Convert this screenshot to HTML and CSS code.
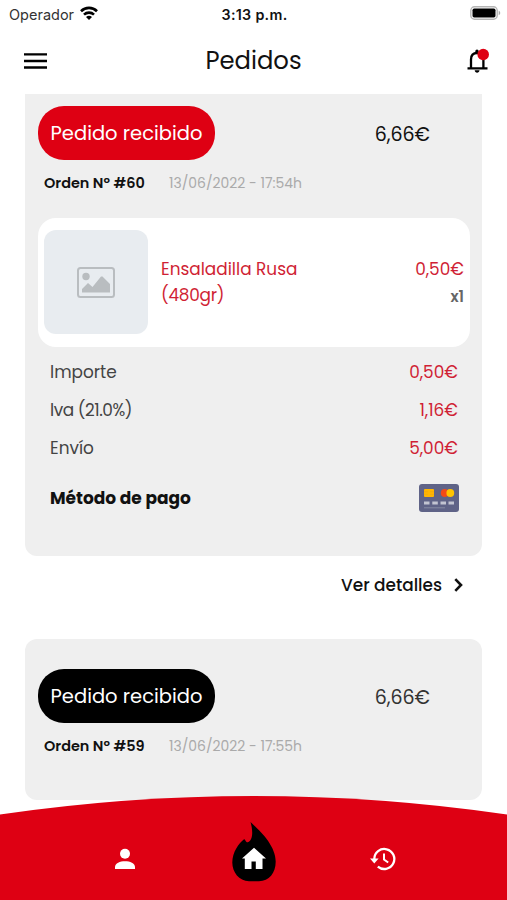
FILE: index.html
```html
<!DOCTYPE html>
<html lang="es">
<head>
<meta charset="utf-8">
<meta name="viewport" content="width=device-width, initial-scale=1">
<title>Pedidos</title>
<link rel="stylesheet" href="styles.css">
</head>
<body>
<div class="app">
  <div class="status-bar">
    <div class="carrier"><span>Operador</span>
      <svg class="wifi" viewBox="0 0 18 14"><g fill="none" stroke="#000" stroke-width="2.6"><path d="M1 5.2a11.4 11.4 0 0 1 16 0"/><path d="M4 8.600a7.2 7.2 0 0 1 10 0"/></g><path d="M9 14L6 11.100a4.4 4.4 0 0 1 6 0z"/></svg>
    </div>
    <span class="clock">3:13 p.m.</span>
    <svg class="battery" viewBox="0 0 31 14"><rect x=".8" y=".8" width="26.4" height="12.4" rx="3.7" fill="#fff" stroke="#b5b5b5" stroke-width="1.4"/><rect x="2.5" y="2.5" width="23" height="9" rx="1.7"/><path d="M28.7 4.8c2 .7 2 3.7 0 4.400z" fill="#aaa"/></svg>
  </div>
  <header class="header">
    <svg class="menu" viewBox="0 0 23 16"><path d="M0 1.400h23M0 8h23M0 14.500h23" stroke="#000" stroke-width="2.300"/></svg>
    <h1 class="title">Pedidos</h1>
    <svg class="bell" viewBox="0 0 24 26"><path d="M1.500 20.300h20M5 20v-8.500c0-4 2.300-6.500 6.200-6.500s6.200 2.500 6.200 6.500V20" fill="none" stroke="#000" stroke-width="2.300"/><path d="M9.300 4.600V3.200a1.700 1.700 0 0 1 3.400 0v1.400zM8.700 22.300h4.800c0 3.200-4.800 3.200-4.800 0z"/><circle cx="17.200" cy="6.500" r="5.800" fill="#de0013"/></svg>
  </header>
  <main class="orders">
    <section class="order order-open">
      <div class="order-head"><span class="badge badge-red">Pedido recibido</span><span class="total">6,66€</span></div>
      <div class="meta"><strong class="number">Orden Nº #60</strong><span class="date">13/06/2022 - 17:54h</span></div>
      <div class="product">
        <div class="thumb"><svg viewBox="0 0 38 31"><rect x="1" y="1" width="36" height="29" rx="2.500" fill="none" stroke="#b9bdc0" stroke-width="2"/><circle cx="9" cy="9.500" r="3.700" fill="#b9bdc0"/><path d="M5 25.500v-3.500l6-6 4.500 4L24 9.500h1.500l7.500 7.500v8.500z" fill="#b9bdc0"/></svg></div>
        <div class="product-name">Ensaladilla Rusa<br><span class="product-size">(480gr)</span></div>
        <div class="product-price"><span class="amount">0,50€</span><strong class="quantity">x1</strong></div>
      </div>
      <dl class="costs">
        <div class="cost"><dt>Importe</dt><dd>0,50€</dd></div>
        <div class="cost"><dt class="label-tax">Iva (21.0%)</dt><dd>1,16€</dd></div>
        <div class="cost"><dt>Envío</dt><dd>5,00€</dd></div>
      </dl>
      <div class="payment"><strong>Método de pago</strong>
        <svg class="card-icon" viewBox="0 0 40 28"><rect width="40" height="28" rx="3" fill="#5f6387"/><rect x="5" y="5" width="10" height="8" rx="1" fill="#ffb600"/><path d="M5 7.700h4M5 10.300h4M11 7.700h4M11 10.300h4" stroke="#e6a116" stroke-width=".5"/><circle cx="25.700" cy="9" r="3.900" fill="#f34a18"/><circle cx="31.300" cy="9" r="3.900" fill="#ffc400"/><path d="M5 19h5.500M13.300 19h5.500M21.500 19h5.500M29.500 19H35" stroke="#c2c4d1" stroke-width="3"/><path d="M5 23.800h21" stroke="#858aa3" stroke-width="1"/></svg>
      </div>
    </section>
    <div class="details"><span>Ver detalles</span><svg viewBox="0 0 9 14"><path d="M1.300 1.200L7 7l-5.700 5.800" fill="none" stroke="#111" stroke-width="2.600"/></svg></div>
    <section class="order order-closed">
      <div class="order-head"><span class="badge badge-black">Pedido recibido</span><span class="total total-muted">6,66€</span></div>
      <div class="meta"><strong class="number">Orden Nº #59</strong><span class="date">13/06/2022 - 17:55h</span></div>
    </section>
  </main>
  <nav class="nav">
    <svg class="nav-curve" viewBox="0 0 507 104"><path d="M0 18.500Q253.500-18.500 507 18.500V104H0z" fill="#de0013"/></svg>
    <div class="nav-items">
      <svg class="user" viewBox="0 0 20 20"><circle cx="10" cy="4.800" r="5" fill="#fff"/><path d="M0 20v-2c0-3.700 5-5.700 10-5.700s10 2 10 5.700v2z" fill="#fff"/></svg>
      <svg class="flame" viewBox="0 0 44 60"><path d="M18.500 0C27 8 43.700 23 43.700 39.500 43.700 51 37 59.200 27 59.200H17C7 59.200.3 50 .3 40.500.3 30 7 21 12 17.200c1.700-.4 1 3 3.800 3.100 5.200-2.300 5.400-11 2.700-20.300z"/><path d="M22 25.800l12 10.700h-3.500V47h-6.700v-7.500h-4.300V47h-6.700V36.500H10z" fill="#fff"/></svg>
      <svg class="history" viewBox="0 0 26 24"><path d="M4.300 12a10 10 0 1 1 3.500 7.600" fill="none" stroke="#fff" stroke-width="2.300"/><path d="M0 11.500h8.600l-4.300 5z" fill="#fff"/><path d="M14 6.500v6l4.200 3" fill="none" stroke="#fff" stroke-width="2"/></svg>
    </div>
  </nav>
</div>
</body>
</html>
```
FILE: styles.css
```css
* { box-sizing: border-box; }
body { margin: 0; background: #fff; color: #111; font-family: Poppins, Inter, sans-serif; }
svg { display: block; flex: none; overflow: visible; }
.app { position: relative; width: 507px; height: 900px; overflow: hidden; }
.status-bar { display: grid; grid-template-columns: 1fr auto 1fr; align-items: center; height: 28px; padding: 0 7px 0 9px; font-family: Inter, sans-serif; }
.carrier { display: flex; align-items: center; gap: 6px; font-size: 14.500px; color: #333; }
.wifi { width: 18px; height: 14px; margin-top: -3px; }
.clock { font-size: 14.300px; font-weight: 600; letter-spacing: .3px; }
.battery { width: 31px; height: 14px; justify-self: end; margin: -2px -1px 0 0; }
.header { display: grid; grid-template-columns: 1fr auto 1fr; align-items: center; height: 66px; padding: 0 17px 1px; }
.menu { width: 23px; height: 16px; margin-left: 7px; }
.title { margin: 0; font-size: 24.300px; font-weight: 400; line-height: 34px; }
.bell { width: 24px; height: 26px; justify-self: end; }
.orders { padding: 0 25px; }
.order { padding: 0 12px 0 13px; background: #efefef; }
.order-open { height: 462px; padding-top: 12px; border-radius: 0 0 12px 12px; }
.order-closed { height: 161px; padding-top: 30px; border-radius: 12px; }
.order-head { display: flex; align-items: center; justify-content: space-between; padding-right: 40px; }
.badge { width: 177px; height: 54px; border-radius: 26px; color: #fff; font-size: 19.500px; line-height: 56px; text-align: center; white-space: nowrap; }
.badge-red { background: #de0013; }
.badge-black { background: #000; }
.total { padding-top: 2px; font-size: 19px; }
.total-muted { color: #333; }
.meta { display: flex; align-items: center; height: 46px; padding-left: 6px; white-space: nowrap; }
.number { width: 125px; font-size: 14.450px; font-weight: 600; }
.date { color: #aaa; font-size: 13.950px; }
.product { display: flex; align-items: center; height: 129px; margin-top: 12px; padding: 0 6px; border-radius: 18px; background: #fff; }
.thumb { display: grid; place-items: center; width: 104px; height: 104px; margin-bottom: 1px; border-radius: 12px; background: #e8ecf0; }
.thumb svg { width: 38px; height: 31px; }
.product-name { flex: 1; margin: -2px 0 0 13px; color: #d01f35; font-size: 16.900px; line-height: 26px; }
.product-size { letter-spacing: -.25px; }
.product-price { display: flex; flex-direction: column; align-items: flex-end; color: #d01f35; font-size: 16.900px; line-height: 27px; }
.quantity { color: #666; font-size: 15px; font-weight: 600; }
.costs { margin: 6px 12px 0; color: #444; font-size: 16.900px; }
.cost { display: flex; justify-content: space-between; height: 38px; line-height: 38px; }
.label-tax { letter-spacing: -.45px; }
.cost dd { margin: 0; color: #d01f35; }
.payment { display: flex; align-items: center; justify-content: space-between; height: 40px; margin: 11px 11px 0 12px; font-size: 17px; }
.card-icon { width: 40px; height: 28px; }
.details { display: flex; align-items: center; justify-content: flex-end; gap: 12px; height: 58px; margin-bottom: 25px; padding-right: 19px; font-size: 16.900px; font-weight: 500; }
.details svg { width: 9px; height: 14px; }
.nav { position: absolute; right: 0; bottom: 0; left: 0; height: 104px; }
.nav-curve { width: 507px; height: 104px; }
.nav-items { position: absolute; inset: 0; display: flex; justify-content: space-between; padding: 26px 111px 0 115px; }
.user { width: 20px; height: 20px; margin-top: 27px; }
.flame { width: 44px; height: 60px; margin: 0 -1px 0 1px; }
.history { width: 26px; height: 24px; margin-top: 25px; }
```
